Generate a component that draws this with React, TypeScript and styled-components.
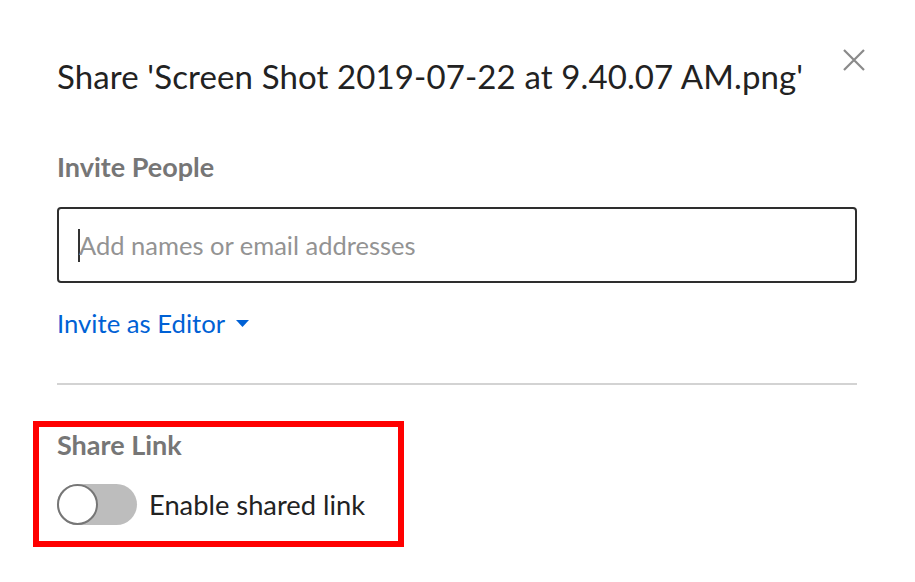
import React from "react";
import styled, { createGlobalStyle } from "styled-components";

const Global = createGlobalStyle`
  html, body { margin: 0; padding: 0; background: #fff; }
  body { font-family: Lato, "Open Sans", sans-serif; color: #222; }
  * { box-sizing: border-box; }
`;

const Dialog = styled.div`
  position: relative;
  width: 915px;
  height: 582px;
  padding: 51px 58px 0 57px;
  display: flex;
  flex-direction: column;
`;

const Title = styled.h1`
  margin: 0;
  font-size: 33px;
  font-weight: 400;
  letter-spacing: 0.12px;
  line-height: 50px;
  color: #222;
  white-space: nowrap;
`;

const Close = styled.button`
  position: absolute;
  top: 47px;
  right: 48px;
  width: 26px;
  height: 26px;
  padding: 0;
  border: none;
  background: none;
  display: flex;
  align-items: center;
  justify-content: center;
`;

const SectionLabel = styled.div<{ $mt: number }>`
  margin-top: ${(p) => p.$mt}px;
  font-size: 27px;
  font-weight: 700;
  line-height: 30px;
  color: #767676;
`;

const InputBox = styled.div`
  margin-top: 25px;
  height: 76px;
  border: 2px solid #2e2e2e;
  border-radius: 4px;
  display: flex;
  align-items: center;
  padding-left: 19px;
`;

const Caret = styled.span`
  width: 2px;
  height: 33px;
  background: #333;
  margin-right: -1px;
`;

const Placeholder = styled.span`
  font-size: 25.5px;
  color: #939393;
`;

const InviteLink = styled.div`
  margin-top: 25px;
  display: flex;
  align-items: center;
  gap: 11px;
  font-size: 25.7px;
  line-height: 30px;
  color: #0061d5;
`;

const Divider = styled.hr`
  margin: 45px 0 0;
  border: none;
  height: 2px;
  background: #d3d3d3;
`;

const Highlight = styled.div`
  margin: 36px 0 0 -24px;
  width: 371px;
  height: 126px;
  border: 6px solid #ff0000;
  padding: 3px 0 0 18px;
`;

const ToggleRow = styled.div`
  margin-top: 24px;
  display: flex;
  align-items: center;
  gap: 12px;
`;

const Track = styled.div`
  position: relative;
  width: 80px;
  height: 41px;
  border-radius: 21px;
  background: #bdbdbd;
`;

const Knob = styled.div`
  position: absolute;
  left: 0;
  top: 0;
  width: 41px;
  height: 41px;
  border-radius: 50%;
  background: #fff;
  border: 2px solid #767676;
`;

const ToggleLabel = styled.span`
  font-size: 27.3px;
  color: #222;
`;

export default function App() {
  return (
    <>
      <Global />
      <Dialog>
        <Title>Share 'Screen Shot 2019-07-22 at 9.40.07 AM.png'</Title>
        <Close aria-label="Close">
          <svg width="24" height="24" viewBox="0 0 24 24">
            <path d="M2 2 L22 22 M22 2 L2 22" stroke="#8a8a8a" strokeWidth="2.2" />
          </svg>
        </Close>
        <SectionLabel $mt={51}>Invite People</SectionLabel>
        <InputBox>
          <Caret />
          <Placeholder>Add names or email addresses</Placeholder>
        </InputBox>
        <InviteLink>
          Invite as Editor
          <svg width="13" height="7" viewBox="0 0 13 7">
            <path d="M0 0 L13 0 L6.5 7 Z" fill="#0061d5" />
          </svg>
        </InviteLink>
        <Divider />
        <Highlight>
          <SectionLabel $mt={0}>Share Link</SectionLabel>
          <ToggleRow>
            <Track>
              <Knob />
            </Track>
            <ToggleLabel>Enable shared link</ToggleLabel>
          </ToggleRow>
        </Highlight>
      </Dialog>
    </>
  );
}
